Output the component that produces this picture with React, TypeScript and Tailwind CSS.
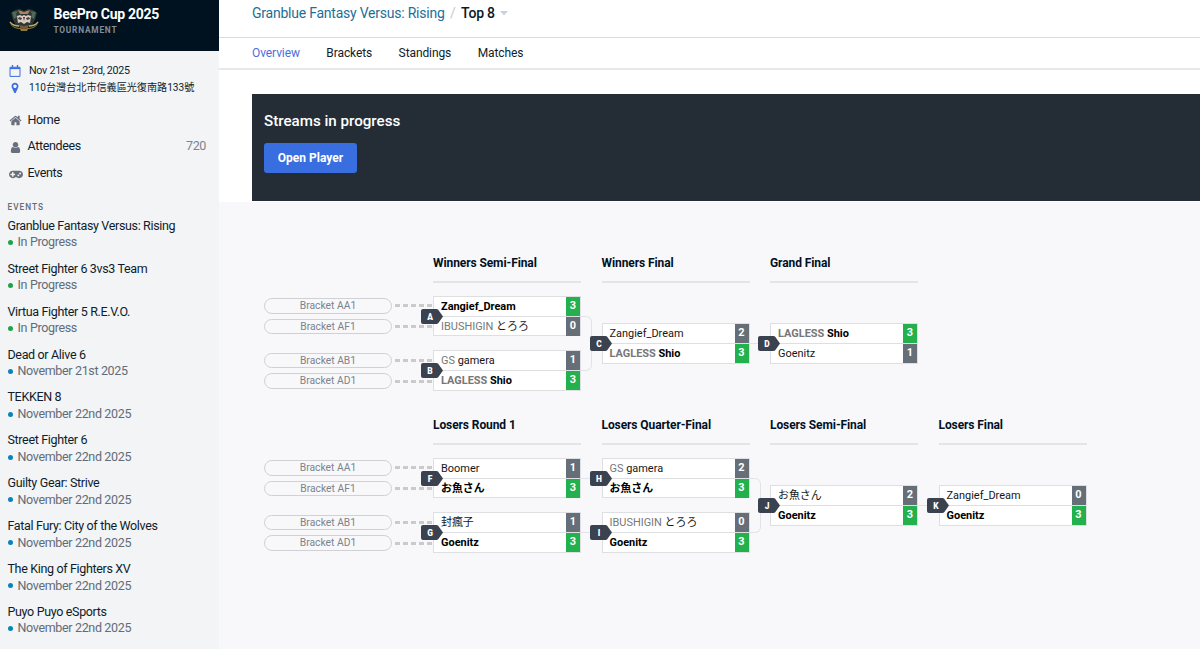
type Player = {
  tag?: string;
  name: string;
  score: number;
  win?: boolean;
};

type MatchData = {
  id: string;
  players: Player[];
};

type Round = {
  title: string;
  matches: MatchData[];
};

const events = [
  { name: "Granblue Fantasy Versus: Rising", status: "In Progress", live: true },
  { name: "Street Fighter 6 3vs3 Team", status: "In Progress", live: true },
  { name: "Virtua Fighter 5 R.E.V.O.", status: "In Progress", live: true },
  { name: "Dead or Alive 6", status: "November 21st 2025" },
  { name: "TEKKEN 8", status: "November 22nd 2025" },
  { name: "Street Fighter 6", status: "November 22nd 2025" },
  { name: "Guilty Gear: Strive", status: "November 22nd 2025" },
  { name: "Fatal Fury: City of the Wolves", status: "November 22nd 2025" },
  { name: "The King of Fighters XV", status: "November 22nd 2025" },
  { name: "Puyo Puyo eSports", status: "November 22nd 2025" },
];

const sources = ["Bracket AA1", "Bracket AF1", "Bracket AB1", "Bracket AD1"];

const winners: Round[] = [
  {
    title: "Winners Semi-Final",
    matches: [
      { id: "A", players: [{ name: "Zangief_Dream", score: 3, win: true }, { tag: "IBUSHIGIN", name: "とろろ", score: 0 }] },
      { id: "B", players: [{ tag: "GS", name: "gamera", score: 1 }, { tag: "LAGLESS", name: "Shio", score: 3, win: true }] },
    ],
  },
  {
    title: "Winners Final",
    matches: [
      { id: "C", players: [{ name: "Zangief_Dream", score: 2 }, { tag: "LAGLESS", name: "Shio", score: 3, win: true }] },
    ],
  },
  {
    title: "Grand Final",
    matches: [
      { id: "D", players: [{ tag: "LAGLESS", name: "Shio", score: 3, win: true }, { name: "Goenitz", score: 1 }] },
    ],
  },
];

const losers: Round[] = [
  {
    title: "Losers Round 1",
    matches: [
      { id: "F", players: [{ name: "Boomer", score: 1 }, { name: "お魚さん", score: 3, win: true }] },
      { id: "G", players: [{ name: "封瘋子", score: 1 }, { name: "Goenitz", score: 3, win: true }] },
    ],
  },
  {
    title: "Losers Quarter-Final",
    matches: [
      { id: "H", players: [{ tag: "GS", name: "gamera", score: 2 }, { name: "お魚さん", score: 3, win: true }] },
      { id: "I", players: [{ tag: "IBUSHIGIN", name: "とろろ", score: 0 }, { name: "Goenitz", score: 3, win: true }] },
    ],
  },
  {
    title: "Losers Semi-Final",
    matches: [
      { id: "J", players: [{ name: "お魚さん", score: 2 }, { name: "Goenitz", score: 3, win: true }] },
    ],
  },
  {
    title: "Losers Final",
    matches: [
      { id: "K", players: [{ name: "Zangief_Dream", score: 0 }, { name: "Goenitz", score: 3, win: true }] },
    ],
  },
];

function Logo() {
  return (
    <svg viewBox="0 0 32 26" className="h-[26px] w-8">
      <path d="M1 12 Q3 19 11 20 L21 20 Q29 19 31 12 L29 17 Q26 21 20 21 L19 23 H13 L12 21 Q6 21 3 17 Z" fill="#8d7d3c" />
      <path d="M7 2 L12 1 L16 3 L20 1 L25 2 L29 5 L27 12 L24 17 L20 20 H12 L8 17 L5 12 L3 5 Z" fill="#2c3733" />
      <path d="M4 4 L10 3 L8 6 L9 9 L6 11 Z M28 4 L22 3 L24 6 L23 9 L26 11 Z" fill="#4f6a5a" />
      <path d="M10 2 L16 4 L22 2 L20 6 H12 Z" fill="#a98260" />
      <path d="M9 8 L12 7 L14 8 L16 7 L18 8 L20 7 L23 8 L22 15 L19 14 L16 16 L13 14 L10 15 Z" fill="#d8ccc2" />
      <path d="M11 9 L14 10 L13 12 L10 11 Z M21 9 L18 10 L19 12 L22 11 Z M15 9 H17 L16 13 Z" fill="#4a3836" />
      <path d="M11 17 L16 18 L21 17 L19 21 H13 Z" fill="#74593a" />
      <path d="M2 14 Q5 18 11 18 M30 14 Q27 18 21 18" fill="none" stroke="#c4ad5c" strokeWidth="1.3" />
    </svg>
  );
}

function CalendarIcon() {
  return (
    <svg viewBox="0 0 12 12" className="h-3 w-3" fill="none" stroke="#3c6ee0">
      <path d="M1 2.3h10v9.1H1z" strokeWidth="1" />
      <path d="M1 3.3h10" strokeWidth="1.6" />
      <path d="M3.5 0v2.6M8.5 0v2.6" strokeWidth="1.3" />
    </svg>
  );
}

function MarkerIcon() {
  return (
    <svg viewBox="0 0 1792 1792" className="h-3 w-3" fill="#3c6ee0">
      <path d="M1152 640q0-106-75-181t-181-75-181 75-75 181 75 181 181 75 181-75 75-181zm256 0q0 109-33 179l-364 774q-16 33-47.5 52t-67.5 19-67.5-19-46.5-52l-365-774q-33-70-33-179 0-212 150-362t362-150 362 150 150 362z" />
    </svg>
  );
}

function HomeIcon() {
  return (
    <svg viewBox="0 0 1792 1792" className="h-[13px] w-[13px]" fill="currentColor">
      <path d="M1472 992v480q0 26-19 45t-45 19h-384v-384h-256v384h-384q-26 0-45-19t-19-45v-480q0-1 .5-3t.5-3l575-474 575 474q1 2 1 6zm223-69l-62 74q-8 9-21 11h-3q-13 0-21-7l-692-577-692 577q-12 8-24 7-13-2-21-11l-62-74q-8-10-7-23.5t11-21.5l719-599q32-26 76-26t76 26l244 204v-195q0-14 9-23t23-9h192q14 0 23 9t9 23v408l219 182q10 8 11 21.5t-7 23.5z" />
    </svg>
  );
}

function UserIcon() {
  return (
    <svg viewBox="0 0 1792 1792" className="h-[13px] w-[13px]" fill="currentColor">
      <path d="M1536 1399q0 109-62.5 187t-150.5 78h-854q-88 0-150.5-78t-62.5-187q0-85 8.5-160.5t31.5-152 58.5-131 94-89 134.5-34.5q131 128 313 128t313-128q76 0 134.5 34.5t94 89 58.5 131 31.5 152 8.5 160.5zm-256-887q0 159-112.5 271.5t-271.5 112.5-271.5-112.5-112.5-271.5 112.5-271.5 271.5-112.5 271.5 112.5 112.5 271.5z" />
    </svg>
  );
}

function GamepadIcon() {
  return (
    <svg viewBox="0 0 1920 1792" className="h-[13px] w-[14px]" fill="currentColor">
      <path d="M832 1088v-128q0-14-9-23t-23-9h-192v-192q0-14-9-23t-23-9h-128q-14 0-23 9t-9 23v192h-192q-14 0-23 9t-9 23v128q0 14 9 23t23 9h192v192q0 14 9 23t23 9h128q14 0 23-9t9-23v-192h192q14 0 23-9t9-23zm576 64q0-53-37.5-90.5t-90.5-37.5-90.5 37.5-37.5 90.5 37.5 90.5 90.5 37.5 90.5-37.5 37.5-90.5zm256-256q0-53-37.5-90.5t-90.5-37.5-90.5 37.5-37.5 90.5 37.5 90.5 90.5 37.5 90.5-37.5 37.5-90.5zm256 128q0 212-150 362t-362 150q-192 0-338-128h-220q-146 128-338 128-212 0-362-150t-150-362 150-362 362-150h896q212 0 362 150t150 362z" />
    </svg>
  );
}

function Sidebar() {
  return (
    <aside className="w-[219px] shrink-0 bg-[#f2f4f6]">
      <div className="flex h-[51px] bg-[#00111f] pt-2 pl-2">
        <Logo />
        <div className="ml-[13.5px] -mt-[2px]">
          <div className="text-[14px] leading-[17px] font-bold tracking-[-0.3px] text-white">BeePro Cup 2025</div>
          <div className="mt-[2px] text-[8.3px] leading-[11px] font-bold tracking-[0.8px] text-[#858d98]">TOURNAMENT</div>
        </div>
      </div>

      <div className="pt-[12px] pl-[9px] text-[10.1px] leading-[16.5px] text-[#0f1c2b]">
        <div className="flex items-center gap-2">
          <CalendarIcon />
          <span className="text-[10.7px] tracking-[-0.27px]">Nov 21st — 23rd, 2025</span>
        </div>
        <div className="flex items-center gap-2">
          <MarkerIcon />
          <span className="whitespace-nowrap">110台灣台北市信義區光復南路133號</span>
        </div>
      </div>

      <nav className="mt-[11px] pr-[13px] pl-[8.5px] text-[12.5px] tracking-[-0.36px] text-[#0f1c2b]">
        <div className="flex h-[26.5px] items-center gap-[5px]">
          <span className="flex w-[14px] justify-center pt-px text-[#67707b]"><HomeIcon /></span>
          Home
        </div>
        <div className="flex h-[26.5px] items-center gap-[5px]">
          <span className="flex w-[14px] justify-center pt-px text-[#67707b]"><UserIcon /></span>
          Attendees
          <span className="ml-auto text-[#7b848e]">720</span>
        </div>
        <div className="flex h-[26.5px] items-center gap-[5px]">
          <span className="flex w-[14px] justify-center text-[#67707b]"><GamepadIcon /></span>
          Events
        </div>
      </nav>

      <div className="mt-[15px] pl-[7.5px]">
        <div className="text-[8.3px] leading-[10px] font-medium tracking-[1px] text-[#626c78]">EVENTS</div>
        <ul className="mt-[6.4px]">
          {events.map((e) => (
            <li key={e.name} className="h-[42.9px] text-[12.5px] leading-[16.5px] tracking-[-0.34px]">
              <div className="text-[#0f1c2b]">{e.name}</div>
              <div className="flex items-center text-[#626c78]">
                <span className={`mr-[5px] h-[5px] w-[5px] rounded-full ${e.live ? "bg-[#1fa34a]" : "bg-[#0a84b8]"}`} />
                {e.status}
              </div>
            </li>
          ))}
        </ul>
      </div>
    </aside>
  );
}

function PlayerRow({ player }: { player: Player }) {
  return (
    <div className="flex h-[19px] items-center justify-between pl-[7px]">
      <span className={`text-[10.95px] leading-[19px] whitespace-nowrap ${player.win ? "font-bold text-black" : "text-[#161616]"}`}>
        {player.tag && <span className="text-[#777]">{player.tag} </span>}
        {player.name}
      </span>
      <span
        className={`flex h-[18.4px] w-[14px] items-center justify-center text-[10.95px] font-bold text-white ${
          player.win ? "bg-[#22b14c]" : "bg-[#666e78]"
        }`}
      >
        {player.score}
      </span>
    </div>
  );
}

function Match({ match }: { match: MatchData }) {
  return (
    <div className="relative h-[40.5px] w-[148px] border border-[#dedfe3] bg-white">
      <PlayerRow player={match.players[0]} />
      <div className="h-px bg-[#dedfe3]" />
      <PlayerRow player={match.players[1]} />
      <svg viewBox="0 0 22 15" className="absolute top-[12px] -left-[13px] h-[15px] w-[22px]">
        <path d="M2 0H15.5Q16.5 0 17.2 .8L22 7.5L17.2 14.2Q16.5 15 15.5 15H2Q0 15 0 13V2Q0 0 2 0Z" fill="#3a4250" />
        <text x="9" y="10.5" textAnchor="middle" fontSize="8.4" fontWeight="900" fill="#fff">{match.id}</text>
      </svg>
    </div>
  );
}

// Lines leading from one round's matches into the next round
function Connector({ from, to }: { from: number; to: number }) {
  if (from === 2 && to === 1) {
    return <div className="absolute top-[20px] left-[148px] h-[55px] w-[11px] rounded-r-[6px] border border-l-0 border-[#e2e3e8]" />;
  }
  if (from === 2) {
    return <div className="absolute top-[20px] left-[148px] h-[55px] w-[20px] border-y border-[#e2e3e8]" />;
  }
  return <div className="absolute top-[47px] left-[148px] h-px w-[20px] bg-[#e2e3e8]" />;
}

function Sources() {
  return (
    <div className="w-[169px] pt-[36px]">
      {sources.map((s, i) => (
        <div key={i} className={`flex items-center ${i === 2 ? "mt-[18.2px]" : i > 0 ? "mt-[5px]" : ""}`}>
          <div className="flex h-[15.7px] w-[128px] items-center justify-center rounded-full border border-[#cfd1d5] text-[10.3px] text-[#7c838b]">
            {s}
          </div>
          <div className="ml-[3px] flex gap-[3px]">
            {[0, 1, 2, 3, 4].map((d) => (
              <span key={d} className="h-[3px] w-[5px] bg-[#cacaca]" />
            ))}
          </div>
        </div>
      ))}
    </div>
  );
}

function Bracket({ rounds }: { rounds: Round[] }) {
  return (
    <div className="flex">
      <Sources />
      <div className="flex gap-[20.5px]">
        {rounds.map((round, i) => (
          <div key={round.title} className="w-[148px]">
            <h3 className="h-[21px] border-b-2 border-[#e3e4e8] text-[12px] leading-[2px] font-bold tracking-[-0.09px] whitespace-nowrap text-[#00111f]">
              {round.title}
            </h3>
            <div className="relative mt-[13px] flex h-[94.6px] flex-col justify-center gap-[13.7px]">
              {i < rounds.length - 1 && <Connector from={round.matches.length} to={rounds[i + 1].matches.length} />}
              {round.matches.map((m) => (
                <Match key={m.id} match={m} />
              ))}
            </div>
          </div>
        ))}
      </div>
    </div>
  );
}

function App() {
  return (
    <div className="flex h-[649px] overflow-hidden bg-[#f8f8fb] font-['Roboto','Noto_Sans_CJK_JP',sans-serif]">
      <Sidebar />
      <main className="min-w-0 flex-1">
        <div className="h-[202px] bg-white">
          <div className="flex h-[38px] items-center border-b border-[#dcdcde] pb-[10px] pl-[33px] text-[14px] tracking-[-0.23px]">
            <span className="text-[#1c6f98]">Granblue Fantasy Versus: Rising</span>
            <span className="mx-[5.5px] text-[#c5cad0]">/</span>
            <span className="font-medium text-[#0b1826]">Top 8</span>
            <svg viewBox="0 0 8 5" className="ml-[5px] h-[5px] w-2">
              <path d="M0 0H8L4 4.6Z" fill="#c9d2dc" />
            </svg>
          </div>
          <div className="flex h-[32px] items-center gap-[26.5px] border-b-2 border-[#e8e8ea] pl-[33px] text-[12px] tracking-[-0.1px] text-[#0f1c2b]">
            <span className="text-[#4a6fdc]">Overview</span>
            <span>Brackets</span>
            <span>Standings</span>
            <span>Matches</span>
          </div>
          <div className="mt-[24px] ml-[33px] h-[107px] bg-[#242d36] pt-[17px] pl-3">
            <h2 className="text-[15.15px] leading-[20px] font-medium text-white">Streams in progress</h2>
            <button className="mt-[12px] h-[30px] w-[93px] rounded-[3px] bg-[#386edf] text-[12px] font-bold text-white">
              Open Player
            </button>
          </div>
        </div>

        <div className="flex flex-col pt-[60px] pl-[45px]">
          <Bracket rounds={winners} />
          <div className="mt-[33.4px]">
            <Bracket rounds={losers} />
          </div>
        </div>
      </main>
    </div>
  );
}

export default App;
